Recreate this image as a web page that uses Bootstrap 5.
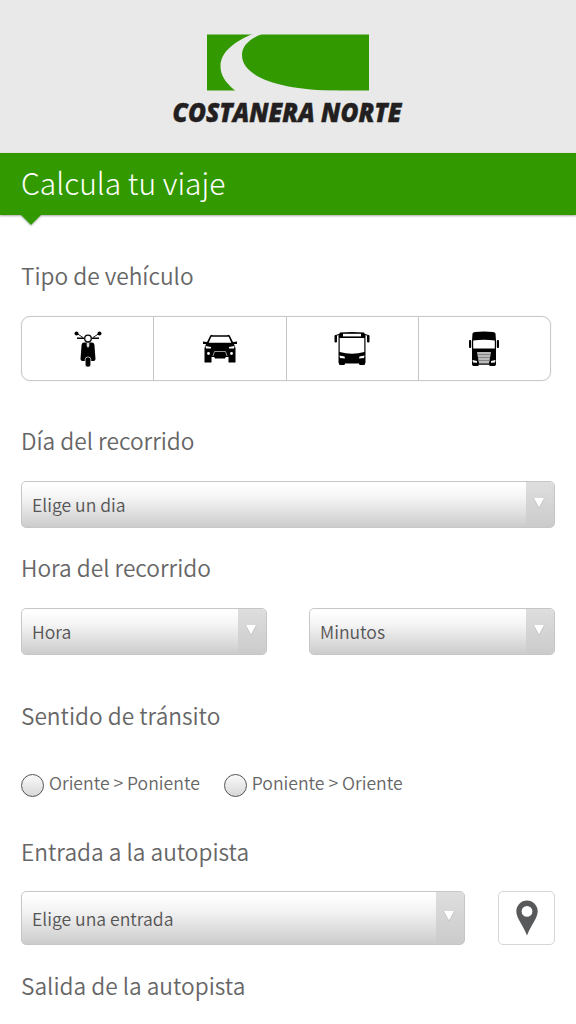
<!DOCTYPE html>
<html lang="es">
<head>
  <meta charset="UTF-8" />
  <meta name="viewport" content="width=device-width, initial-scale=1.0"/>
  <title>Costanera Norte - Calcula tu viaje</title>

  <link href="https://cdn.jsdelivr.net/npm/bootstrap@5.3.2/dist/css/bootstrap.min.css" rel="stylesheet"/>

  <style>
    body {
      font-family: "Noto Sans CJK SC", "Noto Sans", sans-serif;
      color: #666;
      background: #fff;
      height: 1024px;
      overflow: hidden;
    }

    .site-header {
      background: #e9e9e9;
      height: 153px;
      padding-top: 34px;
    }

    .site-header svg {
      overflow: visible;
    }

    .title-bar {
      background: #390;
      height: 62px;
      padding: 0 21px;
      box-shadow: 0 1px 2px rgba(0, 0, 0, 0.35);
    }

    .title-bar h1 {
      font-size: 30px;
      font-weight: 300;
      line-height: 58px;
      color: #fff;
      white-space: nowrap;
    }

    .title-bar::after {
      content: "";
      position: absolute;
      left: 21px;
      top: 100%;
      border: 10.5px solid transparent;
      border-top: 10px solid #390;
      border-bottom: 0;
      filter: drop-shadow(0 1px 1px rgba(0, 0, 0, 0.3));
    }

    .trip-form {
      padding: 45px 21px 0;
    }

    .trip-form h2 {
      height: 30px;
      font-size: 22.7px;
      font-weight: 350;
      line-height: 32px;
      white-space: nowrap;
    }

    .vehicles {
      width: 530px;
      height: 65px;
      margin-top: 26px;
      border: 1px solid #c8c8c8;
      border-radius: 9px;
      box-shadow: 0 0 1px #ccc;
    }

    .vehicles .btn {
      flex: 1 1 0;
      border: 0;
      border-radius: 0;
      padding: 0;
    }

    .vehicles .btn + .btn {
      border-left: 1px solid #c4c4c4;
    }

    .pick {
      height: 47px;
      border: 1px solid #c6c6c6;
      border-radius: 5px;
      background: linear-gradient(#fff 5%, #f4f4f4 35%, #ccc);
      overflow: hidden;
    }

    .pick select {
      appearance: none;
      border: 0;
      background: none;
      color: #555;
      font-size: 17.6px;
      font-weight: 350;
      padding: 1px 10px 0;
    }

    .pick span {
      width: 28px;
      background: linear-gradient(#dedede, #cbcbcb);
      padding: 15px 2px 0 0;
    }

    .pick-tall {
      height: 54px;
    }

    .pick-tall select {
      padding-top: 2px;
    }

    .pick-tall span {
      padding-top: 18px;
    }

    .way input {
      appearance: none;
      width: 23px;
      height: 23px;
      margin: 0;
      border: 1.5px solid #555;
      border-radius: 50%;
      background: linear-gradient(#fafafa, #d8d8d8);
    }

    .way span {
      font-size: 17.6px;
      font-weight: 350;
      line-height: 17px;
      margin-left: 5px;
      white-space: nowrap;
    }

    .btn-map {
      width: 57px;
      height: 54px;
      border: 1.5px solid #d6d6d6;
      border-radius: 5px;
      padding: 0;
    }
  </style>
</head>
<body>

  <header class="site-header text-center">
    <svg width="256" height="96" viewBox="160 34 256 96">
      <rect x="207" y="34.5" width="162" height="56" fill="#390"/>
      <path d="M253 34H262C249 39 242 46 242 55C242 77 280 90 338 90.700V92H236.500L235 90.500C225 82 220.500 75 220.500 66C220.500 52 235 41 253 34Z" fill="#e9e9e9"/>
      <text x="172.500" y="121.500" textLength="229" lengthAdjust="spacingAndGlyphs" font-family="Open Sans, sans-serif" font-weight="800" font-style="italic" font-size="26.500" fill="#231f20" stroke="#231f20" stroke-width=".5">COSTANERA NORTE</text>
    </svg>
  </header>

  <div class="title-bar position-relative">
    <h1 class="m-0">Calcula tu viaje</h1>
  </div>

  <form class="trip-form">
    <h2 class="m-0">Tipo de vehículo</h2>
    <div class="vehicles d-flex">
      <button type="button" class="btn" aria-label="Moto">
        <svg width="30" height="38" viewBox="0 0 30 38">
          <path d="M4 3.500L10 7.500M26 3.500L20 7.500" stroke="#222" stroke-width="1"/>
          <circle cx="3.500" cy="3.500" r="2"/>
          <circle cx="26.500" cy="3.500" r="2"/>
          <path d="M4 8.300H11M19 8.300H26" stroke="#000" stroke-width="1.600"/>
          <path d="M11 12.500H19Q21.500 12.500 21.500 16L22.500 29Q22.500 31 20.500 31H9.500Q7.500 31 7.500 29L8.500 16Q8.500 12.500 11 12.500Z"/>
          <circle cx="15" cy="8.500" r="3.300" fill="#fff" stroke="#000" stroke-width="1.300"/>
          <path d="M13.700 13H16.300V16L15 18L13.700 16Z" fill="#ddd"/>
          <rect x="12.200" y="27" width="5.600" height="10" rx="2.600" stroke="#fff" stroke-width=".7"/>
        </svg>
      </button>
      <button type="button" class="btn" aria-label="Auto">
        <svg width="36" height="30" viewBox="0 0 36 30">
          <path d="M8 2L9 .8L11 1.300H25L27 .8L28 2L31 8L35 7.500V10H32L33.500 14V28.500H26.500V23H9.500V28.500H2.500V14L4 10H1V7.500L5 8Z"/>
          <path d="M9.300 2.700H26.700L29.300 8.700H6.700Z" fill="#fff"/>
          <path d="M3.500 12L9 13V14.500H4ZM32.500 12L27 13V14.500H32Z" fill="#fff"/>
          <circle cx="6.500" cy="19.500" r="1.400" fill="#fff"/>
          <circle cx="29.500" cy="19.500" r="1.400" fill="#fff"/>
          <path d="M11 22L12.500 17.500H23.500L25 22" fill="none" stroke="#bbb" stroke-width=".8"/>
          <path d="M12 22.500H24L23 24.500H13Z"/>
        </svg>
      </button>
      <button type="button" class="btn" aria-label="Bus">
        <svg width="36" height="36" viewBox="0 0 36 36">
          <path d="M6 1.500Q18 .5 30 1.500L31.500 4V31.500L30.500 34H25.500L25 32.500H11L10.500 34H5.500L4.500 31.500V4Z"/>
          <path d="M9 2.800H27V5.400H9Z" fill="#fff"/>
          <path d="M5.700 7H30.300V21Q18 24.500 5.700 21Z" fill="#fff"/>
          <path d="M5.500 24.500L10.500 25.500L11 27.500L6 27ZM30.500 24.500L25.500 25.500L25 27.500L30 27Z" fill="#fff"/>
          <rect x=".5" y="4" width="2.500" height="7.500" rx="1"/>
          <rect x="33" y="4" width="2.500" height="7.500" rx="1"/>
          <path d="M1.500 4.500L5 3.500M34.500 4.500L31 3.500" stroke="#000"/>
        </svg>
      </button>
      <button type="button" class="btn" aria-label="Camión">
        <svg width="32" height="38" viewBox="0 0 32 38">
          <path d="M4.500 3.500Q5 2.300 7 2Q16 .8 25 2Q27 2.300 27.500 3.500L28 11V34.500L27 36H21.500V34.800H10.500V36H5L4 34.500V11Z"/>
          <path d="M5.200 10.500Q16 9 26.800 10.500V18.500H5.200Z" fill="#fff"/>
          <path d="M9 22H23L21 33.500H11Z" fill="#bbb"/>
          <path d="M9.500 24.500H22.500M10 27.500H22M10.500 30.500H21.500" stroke="#777" stroke-width=".8"/>
          <path d="M4.500 30L9 31V32.800L5 32.500ZM27.500 30L23 31V32.800L27 32.500Z" fill="#fff"/>
          <rect x="1" y="10" width="2.200" height="8" rx="1"/>
          <rect x="28.800" y="10" width="2.200" height="8" rx="1"/>
        </svg>
      </button>
    </div>

    <h2 class="mb-0" style="margin-top: 44px">Día del recorrido</h2>
    <div class="pick d-flex" style="margin-top: 26px">
      <select class="flex-grow-1" aria-label="Día"><option>Elige un dia</option></select>
      <span><svg class="d-block mx-auto" width="12" height="12" viewBox="0 0 12 12"><path d="M.5 1H11.500L6 11Z" fill="#fff"/><path d="M.5 1L6 11L11.500 1" fill="none" stroke="#b5b5b5" stroke-width=".6"/></svg></span>
    </div>

    <h2 class="mb-0" style="margin-top: 24px">Hora del recorrido</h2>
    <div class="d-flex" style="margin-top: 26px; gap: 42px">
      <div class="pick d-flex w-50">
        <select class="flex-grow-1" aria-label="Hora"><option>Hora</option></select>
        <span><svg class="d-block mx-auto" width="12" height="12" viewBox="0 0 12 12"><path d="M.5 1H11.500L6 11Z" fill="#fff"/><path d="M.5 1L6 11L11.500 1" fill="none" stroke="#b5b5b5" stroke-width=".6"/></svg></span>
      </div>
      <div class="pick d-flex w-50">
        <select class="flex-grow-1" aria-label="Minutos"><option>Minutos</option></select>
        <span><svg class="d-block mx-auto" width="12" height="12" viewBox="0 0 12 12"><path d="M.5 1H11.500L6 11Z" fill="#fff"/><path d="M.5 1L6 11L11.500 1" fill="none" stroke="#b5b5b5" stroke-width=".6"/></svg></span>
      </div>
    </div>

    <h2 class="mb-0" style="margin-top: 45px">Sentido de tránsito</h2>
    <div class="d-flex" style="margin-top: 44px; gap: 24px">
      <label class="way d-flex"><input type="radio" name="sentido"/><span>Oriente &gt; Poniente</span></label>
      <label class="way d-flex"><input type="radio" name="sentido"/><span>Poniente &gt; Oriente</span></label>
    </div>

    <h2 class="mb-0" style="margin-top: 39px">Entrada a la autopista</h2>
    <div class="d-flex" style="margin-top: 25px; gap: 33px">
      <div class="pick pick-tall d-flex flex-grow-1">
        <select class="flex-grow-1" aria-label="Entrada"><option>Elige una entrada</option></select>
        <span><svg class="d-block mx-auto" width="12" height="12" viewBox="0 0 12 12"><path d="M.5 1H11.500L6 11Z" fill="#fff"/><path d="M.5 1L6 11L11.500 1" fill="none" stroke="#b5b5b5" stroke-width=".6"/></svg></span>
      </div>
      <button type="button" class="btn btn-map" aria-label="Ver mapa">
        <svg class="d-block mx-auto" width="24" height="36" viewBox="0 0 24 36">
          <path fill-rule="evenodd" d="M12 .5A10.700 10.700 0 0 1 22.700 11.200C22.700 18 16 25 12 35.500C8 25 1.300 18 1.300 11.200A10.700 10.700 0 0 1 12 .5ZM12 6A5.400 5.400 0 1 0 12 16.800A5.400 5.400 0 1 0 12 6Z" fill="#58595b"/>
        </svg>
      </button>
    </div>

    <h2 class="mb-0" style="margin-top: 25px">Salida de la autopista</h2>
  </form>

  <script src="https://cdn.jsdelivr.net/npm/bootstrap@5.3.2/dist/js/bootstrap.bundle.min.js"></script>
</body>
</html>
